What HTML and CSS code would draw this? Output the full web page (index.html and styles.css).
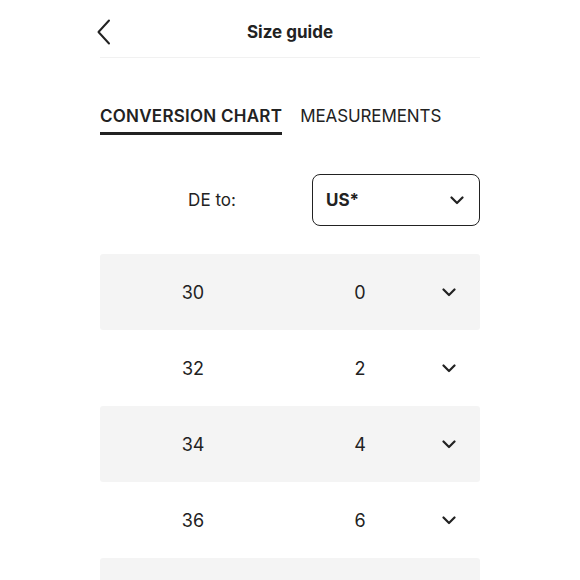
FILE: index.html
```html
<!DOCTYPE html>
<html>
<head>
<meta charset="utf-8">
<link rel="stylesheet" href="styles.css">
</head>
<body>
<div class="page">
  <header class="header">
    <svg class="back" width="16" height="26" viewBox="0 0 16 26"><path d="M13 1.5 L2.5 13 L13 24.5" fill="none" stroke="#222" stroke-width="2" stroke-linecap="round" stroke-linejoin="round"/></svg>
    <h1 class="title">Size guide</h1>
  </header>
  <nav class="tabs">
    <span class="tab active">CONVERSION CHART</span>
    <span class="tab">MEASUREMENTS</span>
  </nav>
  <div class="convert">
    <span class="label">DE to:</span>
    <div class="select">
      <span class="select-value">US*</span>
      <svg width="14" height="9" viewBox="0 0 14 9"><path d="M1.5 1.5 L7 7 L12.5 1.5" fill="none" stroke="#222" stroke-width="2.2" stroke-linecap="round" stroke-linejoin="round"/></svg>
    </div>
  </div>
  <div class="rows">
    <div class="row shade"><span class="de">30</span><span class="us">0</span><svg class="chev" width="14" height="9" viewBox="0 0 14 9"><path d="M1.5 1.5 L7 7 L12.5 1.5" fill="none" stroke="#222" stroke-width="2.2" stroke-linecap="round" stroke-linejoin="round"/></svg></div>
    <div class="row"><span class="de">32</span><span class="us">2</span><svg class="chev" width="14" height="9" viewBox="0 0 14 9"><path d="M1.5 1.5 L7 7 L12.5 1.5" fill="none" stroke="#222" stroke-width="2.2" stroke-linecap="round" stroke-linejoin="round"/></svg></div>
    <div class="row shade"><span class="de">34</span><span class="us">4</span><svg class="chev" width="14" height="9" viewBox="0 0 14 9"><path d="M1.5 1.5 L7 7 L12.5 1.5" fill="none" stroke="#222" stroke-width="2.2" stroke-linecap="round" stroke-linejoin="round"/></svg></div>
    <div class="row"><span class="de">36</span><span class="us">6</span><svg class="chev" width="14" height="9" viewBox="0 0 14 9"><path d="M1.5 1.5 L7 7 L12.5 1.5" fill="none" stroke="#222" stroke-width="2.2" stroke-linecap="round" stroke-linejoin="round"/></svg></div>
    <div class="row shade"></div>
  </div>
</div>
</body>
</html>
```
FILE: styles.css
```css
html, body {
  margin: 0;
  padding: 0;
  background: #fff;
  overflow: hidden;
}
body {
  font-family: Inter, "Liberation Sans", sans-serif;
  color: #222;
}
.page {
  width: 380px;
  margin-left: 100px;
}
.header {
  position: relative;
  height: 51px;
  padding-top: 6px;
  display: flex;
  align-items: center;
  justify-content: center;
  border-bottom: 1.5px solid #f1f1f1;
}
.back {
  position: absolute;
  left: -4px;
  top: 19px;
}
.title {
  margin: 0;
  font-size: 17px;
  font-weight: 700;
  line-height: 20px;
}
.tabs {
  margin-top: 48px;
  display: flex;
  gap: 18px;
}
.tab {
  font-size: 17px;
  line-height: 20px;
  font-weight: 400;
  padding-bottom: 6px;
  border-bottom: 3px solid transparent;
  letter-spacing: -0.1px;
}
.tab.active {
  font-weight: 600;
  letter-spacing: 0.25px;
  border-bottom-color: #222;
}
.convert {
  margin-top: 39px;
  display: grid;
  grid-template-columns: 212px 1fr;
  align-items: center;
}
.label {
  text-align: center;
  padding-left: 12px;
  font-size: 17px;
}
.select {
  height: 50px;
  border: 1.5px solid #222;
  border-radius: 8px;
  display: flex;
  align-items: center;
  justify-content: space-between;
  padding: 0 15px 0 13px;
}
.select-value {
  font-size: 17px;
  font-weight: 700;
}
.rows {
  margin-top: 28px;
}
.row {
  height: 76px;
  display: grid;
  grid-template-columns: 186px 148px 1fr;
  align-items: center;
  font-size: 18px;
  border-radius: 3px;
}
.row.shade {
  background: #f4f4f4;
}
.de, .us {
  text-align: center;
}
.chev {
  margin-left: 8px;
}
```
